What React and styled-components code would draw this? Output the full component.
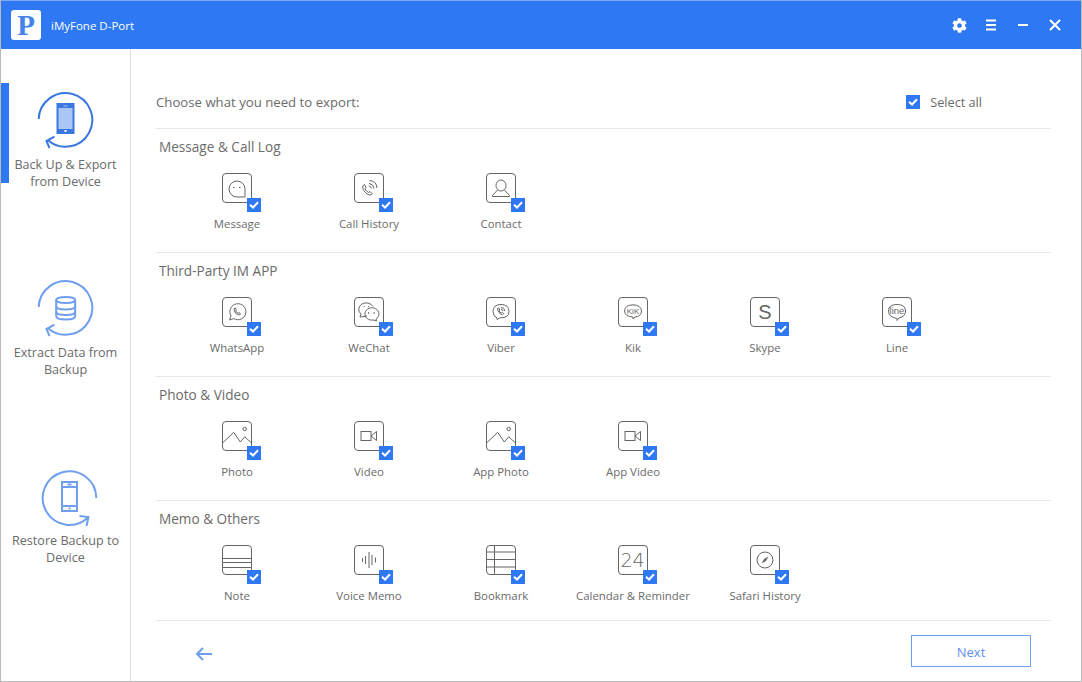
import styled, { createGlobalStyle } from 'styled-components'
import { FaCog } from 'react-icons/fa'

const GlobalStyle = createGlobalStyle`
  html, body {
    margin: 0;
    padding: 0;
    background: #fff;
    overflow: hidden;
  }
  * {
    box-sizing: border-box;
  }
`

// #region styles
const Window = styled.div`
  width: 1082px;
  height: 682px;
  display: flex;
  flex-direction: column;
  border: 1px solid #b9b9b9;
  border-top: 0;
  background: #fff;
  color: #6b6b6b;
  font-family: 'Open Sans', 'Liberation Sans', sans-serif;
  font-size: 12px;
`

const TitleBar = styled.header`
  height: 49px;
  flex: none;
  display: flex;
  align-items: center;
  padding: 0 18px 0 10px;
  background: #2f78f4;
  border-top: 1px solid #7da9f3;
  color: #fff;
`

const Logo = styled.div`
  width: 30px;
  height: 30px;
  display: flex;
  align-items: center;
  justify-content: center;
  border-radius: 3px;
  background: #fff;
  color: #4484ea;
  font-family: 'Liberation Serif', serif;
  font-size: 29px;
  font-weight: 700;
  line-height: 30px;
`

const AppName = styled.span`
  margin-left: 10px;
  font-size: 11.5px;
`

const WindowButtons = styled.div`
  margin-left: auto;
  display: flex;
  align-items: center;
  gap: 16px;
`

const WindowButton = styled.span`
  width: 16px;
  height: 16px;
  display: flex;
  align-items: center;
  justify-content: center;
  color: #fff;
`

const Body = styled.div`
  flex: 1;
  display: flex;
  min-height: 0;
`

const Sidebar = styled.nav`
  width: 130px;
  flex: none;
  display: flex;
  flex-direction: column;
  gap: 88px;
  padding-top: 34px;
  border-right: 1px solid #dedede;
`

const NavItem = styled.div`
  height: 100px;
  display: flex;
  flex-direction: column;
  align-items: center;
  padding: 5px 0 0;
  border-left: 8px solid ${(p) => (p.$active ? '#2f78f4' : 'transparent')};
`

const NavIcon = styled.svg`
  width: 64px;
  height: 64px;
  flex: none;
  margin-left: ${(p) => p.$shift || -11}px;
`

const NavLabel = styled.div`
  width: 122px;
  margin: 4px 0 0 -8px;
  text-align: center;
  font-size: 12.6px;
  line-height: 17px;
  white-space: nowrap;
`

const Main = styled.main`
  flex: 1;
  display: flex;
  flex-direction: column;
  padding: 0 30px 0 25px;
  min-width: 0;
`

const Header = styled.div`
  height: 80px;
  flex: none;
  display: flex;
  align-items: center;
  justify-content: space-between;
  padding: 26px 69px 0 0;
  border-bottom: 1px solid #e6e8f0;
  font-size: 13.2px;
`

const SelectAll = styled.label`
  display: flex;
  align-items: center;
  gap: 10px;
  font-size: 12.7px;
`

const Section = styled.section`
  height: 124px;
  flex: none;
  padding-top: 9px;
  border-bottom: 1px solid #e6e8f0;

  &:last-of-type {
    height: 120px;
  }
`

const SectionTitle = styled.h2`
  margin: 0 0 0 3px;
  height: 18px;
  line-height: 18px;
  font-size: 13.6px;
  font-weight: 400;
`

const ItemRow = styled.div`
  display: grid;
  grid-template-columns: repeat(6, 132px);
  margin: 17px 0 0 15px;
`

const Item = styled.div`
  display: flex;
  flex-direction: column;
  align-items: center;
`

const Tile = styled.div`
  position: relative;
  width: 30px;
  height: 30px;
  border: 1px solid #666;
  border-radius: 4px;
`

const TileArt = styled.svg`
  position: absolute;
  left: -1px;
  top: -1px;
  width: 30px;
  height: 30px;
  fill: none;
  stroke: #666;
  stroke-width: 1;
`

const TileText = styled.text`
  fill: #666;
  stroke: none;
  font-family: ${(p) => p.$font || "'Liberation Sans', sans-serif"};
  font-size: ${(p) => p.$size}px;
  font-weight: ${(p) => p.$weight || 400};
  text-anchor: middle;
`

const Check = styled.span`
  width: 14px;
  height: 14px;
  display: flex;
  align-items: center;
  justify-content: center;
  background: #2f78f4;
`

const TileCheck = styled(Check)`
  position: absolute;
  right: -10px;
  bottom: -10px;
`

const ItemLabel = styled.div`
  margin-top: 12px;
  font-size: 11.4px;
  line-height: 17px;
  white-space: nowrap;
`

const Footer = styled.div`
  flex: 1;
  display: flex;
  align-items: flex-start;
  justify-content: space-between;
  padding: 14px 20px 0 39px;
`

const BackButton = styled.button`
  width: 18px;
  height: 18px;
  margin-top: 10px;
  padding: 0;
  display: flex;
  border: 0;
  background: none;
  color: #6d9fee;
`

const NextButton = styled.button`
  width: 120px;
  height: 32px;
  padding: 1px 0 0;
  border: 1px solid #6d9fee;
  background: #fff;
  color: #5d8fe6;
  font-family: inherit;
  font-size: 13px;
`
// #endregion

const Tick = () => (
  <svg width="10" height="8" viewBox="0 0 10 8" fill="none" stroke="#fff" strokeWidth="2">
    <path d="M1 3.8 L4 6.5 L9 1.2" />
  </svg>
)

const ringBack = (
  <>
    <path d="M6.7 31 A26.8 26.8 0 1 1 15.7 52" />
    <path d="M22.5 48.7 L14.5 53 L17.5 60" />
  </>
)

const ringForward = (
  <>
    <path d="M59.3 34 A26.8 26.8 0 1 0 51.5 53" />
    <path d="M42.5 52 L51.5 53 L49.5 62" />
  </>
)

const icons = {
  message: (
    <>
      <path d="M15 24 A8 8 0 1 1 23 16 V24 Z" />
      <path d="M11 14.5 H12.5 M17 14.5 H18.5" />
    </>
  ),
  call: (
    <>
      <path d="M8.5 13 L10.5 11.5 L12 14.5 L11 15.8 Q12.2 18.4 14.5 19.5 L16 18.5 L18.3 20.8 L16 22.3 Q9 20 8.5 13 Z" />
      <path d="M15 10.5 Q19.5 11 20 15.5 M15.5 7.5 Q22.5 8 23 15 M14.8 13 Q17 13.3 17.4 15.5" />
    </>
  ),
  contact: (
    <>
      <ellipse cx="15" cy="12.5" rx="5" ry="5.5" />
      <path d="M11.5 17 L6.5 22.5 V23.5 H23.5 V22.5 L18.5 17" />
    </>
  ),
  whatsapp: (
    <>
      <path d="M7.5 23 L9 18.8 A8 8 0 1 1 11.8 21.6 Z" />
      <path d="M12 11.5 L13.4 11 L14.4 13 L13.6 14 Q14.4 15.6 16 16.3 L17 15.5 L18.6 16.8 L17.6 18 Q12.4 17.6 12 11.5 Z" />
    </>
  ),
  wechat: (
    <>
      <path d="M13 19 Q7 20 6 20 L7 17 A7.5 6.5 0 1 1 19 9.5" />
      <path d="M22.5 24 L22 22 A7 6.2 0 1 0 19.5 23 Z" />
      <path d="M9.5 9.5 H10.5 M14 9.5 H15" />
      <path d="M14 16 H15.2 M19.5 16 H20.7" strokeWidth="1.4" />
    </>
  ),
  viber: (
    <>
      <path d="M11 22.5 V20.8 Q7 19.5 7 14.5 Q7 7.5 15 7.5 Q23 7.5 23 14.5 Q23 21 14 20.8 Z" />
      <path d="M11.5 11.5 L12.8 11 L13.8 13 L13 14 Q14 15.6 15.4 16 L16.4 15.2 L17.8 16.6 L16.6 17.6 Q12 16.6 11.5 11.5 Z" />
      <path d="M15 10.2 Q18.6 10.6 18.8 14 M15 12.2 Q16.8 12.4 17 14" />
    </>
  ),
  kik: (
    <>
      <path d="M15 20 Q7 19.8 6.5 14 Q7 8 15 7.8 Q23 8 23.5 14 Q23 19.8 17 20 L15 22 Z" />
      <TileText x="15" y="16.8" $size={8}>KiK</TileText>
    </>
  ),
  skype: (
    <TileText x="15" y="21.5" $size={20}>S</TileText>
  ),
  line: (
    <>
      <path d="M15 21.5 Q6.5 20 6.5 14 Q6.5 7.5 15 7.5 Q23.5 7.5 23.5 14 Q23.5 19.5 17 21 L15 23.5 Z" />
      <TileText x="15" y="17.2" $size={9.5}>line</TileText>
    </>
  ),
  photo: (
    <>
      <circle cx="22.7" cy="8" r="1.7" />
      <path d="M0.5 22 L11.7 11.3 L18.3 21 L22.7 15.7 L29.5 22" />
    </>
  ),
  video: (
    <>
      <rect x="7" y="10.5" width="10" height="9" />
      <path d="M17 15 L22.5 10.5 V19.5 Z" />
    </>
  ),
  note: (
    <path d="M0.5 13.5 H29.5 M0.5 17.5 H29.5 M0.5 22.5 H29.5" strokeWidth="1.1" />
  ),
  voice: (
    <path d="M8.5 13 V17 M11.5 11 V19 M15 7 V23 M18 10 V20 M21.5 12.5 V17.5" />
  ),
  bookmark: (
    <path d="M8.5 0.5 V29.5 M0.5 7 H29.5 M0.5 14.5 H29.5 M0.5 22 H29.5" />
  ),
  calendar: (
    <TileText x="14.5" y="21.8" $size={19} $weight={200} $font="'DejaVu Sans', sans-serif">24</TileText>
  ),
  safari: (
    <>
      <circle cx="15" cy="15" r="8" />
      <path d="M18.5 11.5 L16 16 L11.5 18.5 L14 14 Z" fill="#666" stroke="none" />
    </>
  ),
}

const sections = [
  {
    title: 'Message & Call Log',
    items: [
      ['Message', 'message'],
      ['Call History', 'call'],
      ['Contact', 'contact'],
    ],
  },
  {
    title: 'Third-Party IM APP',
    items: [
      ['WhatsApp', 'whatsapp'],
      ['WeChat', 'wechat'],
      ['Viber', 'viber'],
      ['Kik', 'kik'],
      ['Skype', 'skype'],
      ['Line', 'line'],
    ],
  },
  {
    title: 'Photo & Video',
    items: [
      ['Photo', 'photo'],
      ['Video', 'video'],
      ['App Photo', 'photo'],
      ['App Video', 'video'],
    ],
  },
  {
    title: 'Memo & Others',
    items: [
      ['Note', 'note'],
      ['Voice Memo', 'voice'],
      ['Bookmark', 'bookmark'],
      ['Calendar & Reminder', 'calendar'],
      ['Safari History', 'safari'],
    ],
  },
]

export default function App() {
  return (
    <>
      <GlobalStyle />
      <Window>
        <TitleBar>
          <Logo>P</Logo>
          <AppName>iMyFone D-Port</AppName>
          <WindowButtons>
            <WindowButton>
              <FaCog size={15} />
            </WindowButton>
            <WindowButton>
              <svg width="12" height="12" viewBox="0 0 12 12" stroke="#fff" strokeWidth="2">
                <path d="M1 1.5 H11 M1 6 H11 M1 10.5 H11" />
              </svg>
            </WindowButton>
            <WindowButton>
              <svg width="12" height="12" viewBox="0 0 12 12" stroke="#fff" strokeWidth="2">
                <path d="M1 6 H11" />
              </svg>
            </WindowButton>
            <WindowButton>
              <svg width="12" height="12" viewBox="0 0 12 12" stroke="#fff" strokeWidth="2">
                <path d="M1 1 L11 11 M11 1 L1 11" />
              </svg>
            </WindowButton>
          </WindowButtons>
        </TitleBar>

        <Body>
          <Sidebar>
            <NavItem $active>
              <NavIcon viewBox="0 0 64 64" fill="none" stroke="#3a78e0" strokeWidth="2">
                {ringBack}
                <rect x="25.5" y="16" width="16" height="29" fill="#a9c6f5" />
                <path d="M25.5 18 H41.5 M25.5 43 H41.5" strokeWidth="4" />
                <path d="M31.5 18 H35.5" stroke="#a9c6f5" strokeWidth="1" />
                <path d="M32.5 43 H34.5" stroke="#fff" strokeWidth="2" />
              </NavIcon>
              <NavLabel>Back Up &amp; Export<br />from Device</NavLabel>
            </NavItem>

            <NavItem>
              <NavIcon viewBox="0 0 64 64" fill="none" stroke="#6f9fee" strokeWidth="2">
                {ringBack}
                <ellipse cx="33.7" cy="24" rx="9.5" ry="3" />
                <path d="M24.2 24 V40 Q24.2 43.5 33.7 43.5 Q43.2 43.5 43.2 40 V24" />
                <path d="M24.2 30 Q24.2 33.5 33.7 33.5 Q43.2 33.5 43.2 30 M24.2 35.5 Q24.2 39 33.7 39 Q43.2 39 43.2 35.5" />
              </NavIcon>
              <NavLabel>Extract Data from<br />Backup</NavLabel>
            </NavItem>

            <NavItem>
              <NavIcon viewBox="0 0 64 64" fill="none" stroke="#6f9fee" strokeWidth="2" $shift={-1}>
                {ringForward}
                <rect x="25" y="18" width="15" height="29" />
                <path d="M25 23 H40 M25 42 H40" />
                <path d="M30.5 20.5 H34.5 M31.5 44.5 H33.5" />
              </NavIcon>
              <NavLabel>Restore Backup to<br />Device</NavLabel>
            </NavItem>
          </Sidebar>

          <Main>
            <Header>
              <span>Choose what you need to export:</span>
              <SelectAll>
                <Check><Tick /></Check>
                Select all
              </SelectAll>
            </Header>

            {sections.map((section) => (
              <Section key={section.title}>
                <SectionTitle>{section.title}</SectionTitle>
                <ItemRow>
                  {section.items.map(([label, icon]) => (
                    <Item key={label}>
                      <Tile>
                        <TileArt viewBox="0 0 30 30">{icons[icon]}</TileArt>
                        <TileCheck><Tick /></TileCheck>
                      </Tile>
                      <ItemLabel>{label}</ItemLabel>
                    </Item>
                  ))}
                </ItemRow>
              </Section>
            ))}

            <Footer>
              <BackButton aria-label="Back">
                <svg width="18" height="18" viewBox="0 0 18 18" fill="none" stroke="currentColor" strokeWidth="2">
                  <path d="M17 9 H2 M8 3 L2 9 L8 15" />
                </svg>
              </BackButton>
              <NextButton>Next</NextButton>
            </Footer>
          </Main>
        </Body>
      </Window>
    </>
  )
}
